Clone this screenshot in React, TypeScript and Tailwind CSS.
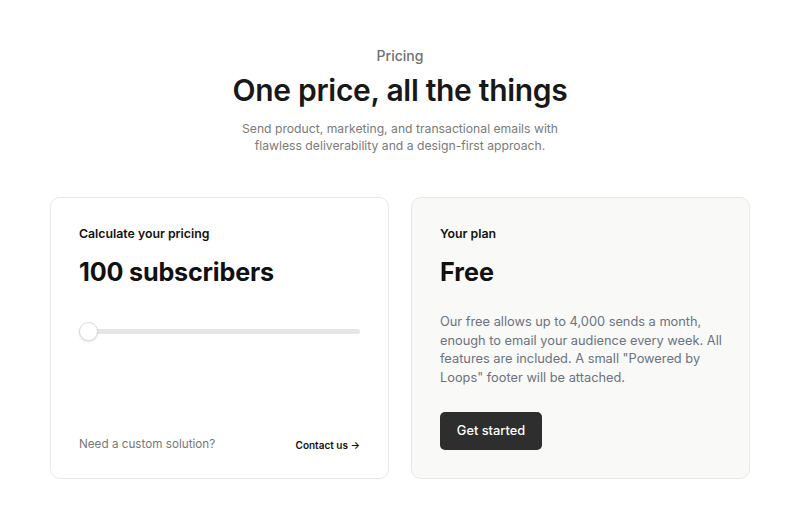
export default function App() {
  return (
    <div className="min-h-screen bg-white font-['Inter',sans-serif] text-[#111]">
      <div className="flex flex-col items-center pt-[46px]">
        <p className="text-[14px] leading-[20px] font-medium text-[#6f6f6f]">Pricing</p>
        <h1 className="mt-[6px] text-[30px] leading-[36px] font-semibold tracking-[-0.3px] text-[#181818]">
          One price, all the things
        </h1>
        <p className="mt-[12px] text-center text-[12.2px] leading-[17px] text-[#7a7a7a]">
          Send product, marketing, and transactional emails with
          <br />
          flawless deliverability and a design-first approach.
        </p>
      </div>

      <div className="mx-auto mt-[43px] grid w-[700px] grid-cols-2 gap-[22px]">
        <div className="flex h-[282px] flex-col rounded-[10px] border border-[#e8e8e8] bg-white px-[28px] pt-[27px] pb-[24px]">
          <p className="text-[12.3px] leading-[18px] font-semibold">Calculate your pricing</p>
          <p className="mt-[14px] text-[25.2px] leading-[30px] font-bold tracking-[-0.2px]">100 subscribers</p>
          <div className="relative mt-[35px] flex h-[18px] items-center">
            <div className="h-[5px] w-full rounded-full bg-[#e6e6ea]" />
            <div className="absolute left-0 top-0 h-[19px] w-[19px] rounded-full border border-[#dcdcdc] bg-white shadow-[0_1px_2px_rgba(0,0,0,0.12)]" />
          </div>
          <div className="mt-auto flex items-center justify-between">
            <p className="text-[11.7px] text-[#777]">Need a custom solution?</p>
            <p className="text-[10px] font-semibold text-[#111]">Contact us →</p>
          </div>
        </div>

        <div className="flex h-[282px] flex-col rounded-[10px] border border-[#e8e8e8] bg-[#f9f9f8] pl-[28px] pr-[4px] pt-[27px]">
          <p className="text-[12.3px] leading-[18px] font-semibold">Your plan</p>
          <p className="mt-[14px] text-[25.2px] leading-[30px] font-bold">Free</p>
          <p className="mt-[26px] text-[12.8px] leading-[18.7px] text-[#6b7280]">
            Our free allows up to 4,000 sends a month, enough to email your audience every week. All features are
            included. A small "Powered by Loops" footer will be attached.
          </p>
          <button className="mt-[24px] h-[38px] w-[102px] rounded-[5px] bg-[#2e2e2e] text-[12.8px] font-medium text-white">
            Get started
          </button>
        </div>
      </div>
    </div>
  );
}
